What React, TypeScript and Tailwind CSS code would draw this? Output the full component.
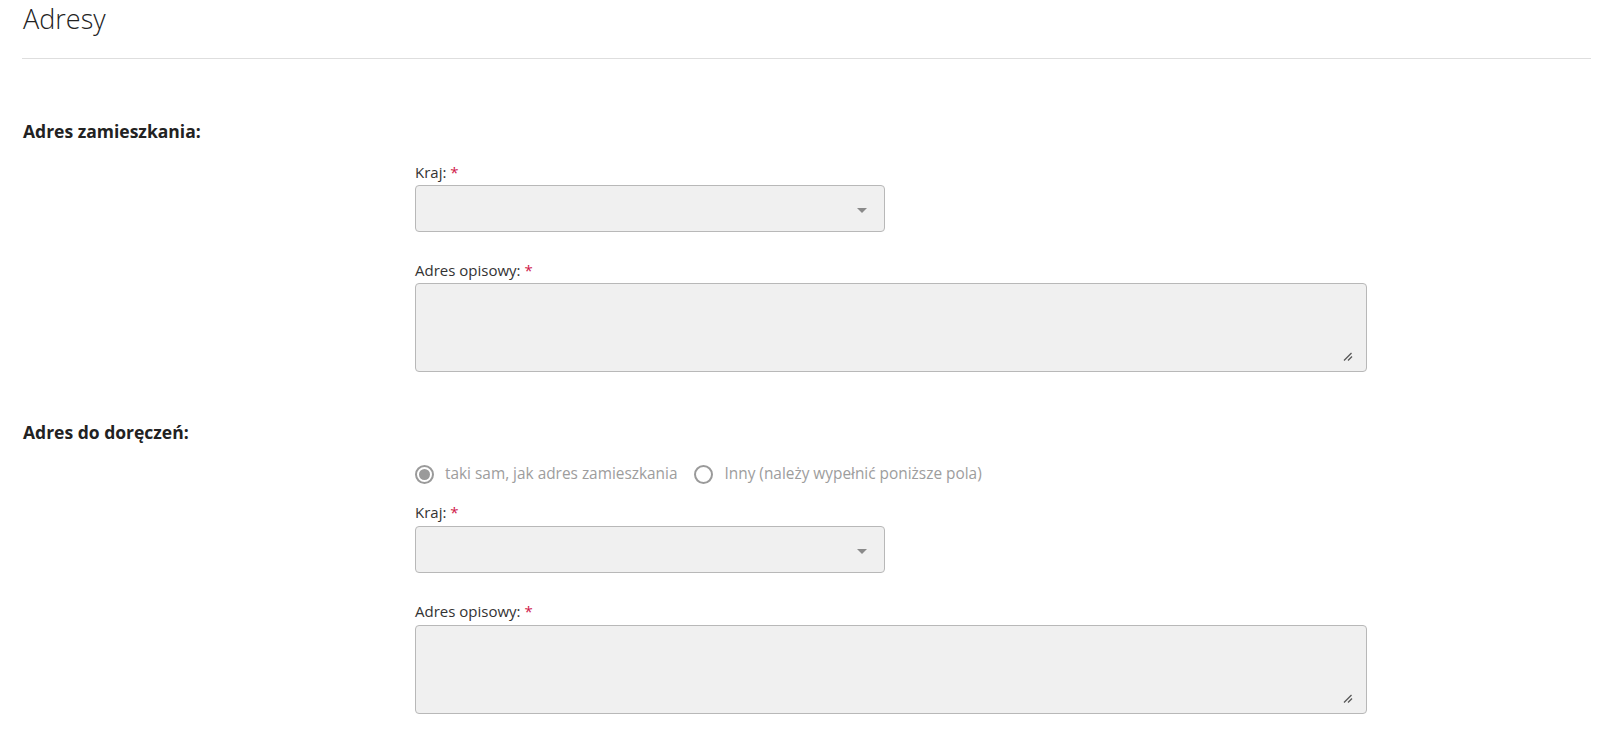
import React from "react";

const Star = () => <span className="text-[#d0184a]"> *</span>;

function Label({ text, className = "" }: { text: string; className?: string }) {
  return (
    <div className={"h-[20px] text-[15px] leading-[20px] text-[#333333] " + className}>
      {text}:<Star />
    </div>
  );
}

function SelectBox({ className = "" }: { className?: string }) {
  return (
    <div
      className={
        "relative w-[470px] h-[47px] rounded-[4px] border border-[#b8b8b8] bg-[#f0f0f0] " + className
      }
    >
      <svg
        className="absolute right-[17px] top-[22px]"
        width="10"
        height="5"
        viewBox="0 0 10 5"
      >
        <polygon points="0,0 10,0 5,5" fill="#8a8a8a" />
      </svg>
    </div>
  );
}

function TextArea({ className = "" }: { className?: string }) {
  return (
    <div
      className={
        "relative w-[952px] h-[89px] rounded-[4px] border border-[#b8b8b8] bg-[#f0f0f0] " + className
      }
    >
      <svg
        className="absolute right-[13px] bottom-[10px]"
        width="10"
        height="9"
        viewBox="0 0 10 9"
      >
        <line x1="1" y1="8.5" x2="8.5" y2="1" stroke="#555" strokeWidth="1.3" />
        <line x1="5" y1="8.5" x2="9" y2="4.5" stroke="#555" strokeWidth="1.3" />
      </svg>
    </div>
  );
}

function Radio({ checked, label }: { checked: boolean; label: string }) {
  return (
    <div className="flex items-center h-[20px]">
      <div className="w-[19px] h-[19px] rounded-full border-2 border-[#9a9a9a] flex items-center justify-center bg-white">
        {checked && <div className="w-[11px] h-[11px] rounded-full bg-[#9a9a9a]" />}
      </div>
      <span className="ml-[11px] text-[15.4px] leading-[20px] text-[#9d9d9d]">{label}</span>
    </div>
  );
}

export default function App() {
  return (
    <div
      className="bg-white min-h-[747px] pl-[22px] pr-[28px] text-[#222222]"
      style={{ fontFamily: '"Open Sans", "Noto Sans", sans-serif' }}
    >
      <h1 className="pt-[1px] h-[37px] text-[27px] leading-[36px] font-light text-[#222222] pl-[1px]">
        Adresy
      </h1>
      <div className="mt-[21px] border-t border-[#dedede]" />

      <h2 className="mt-[60px] h-[24px] text-[17.5px] leading-[24px] font-bold text-[#222222] pl-[1px]">
        Adres zamieszkania:
      </h2>
      <div className="pl-[393px]">
        <Label text="Kraj" className="mt-[19px]" />
        <SelectBox className="mt-[3px]" />
        <Label text="Adres opisowy" className="mt-[28px]" />
        <TextArea className="mt-[3px]" />
      </div>

      <h2 className="mt-[48px] h-[24px] text-[17.5px] leading-[24px] font-bold text-[#222222] pl-[1px]">
        Adres do doręczeń:
      </h2>
      <div className="pl-[393px]">
        <div className="mt-[20px] flex items-center gap-[17px]">
          <Radio checked label="taki sam, jak adres zamieszkania" />
          <Radio checked={false} label="Inny (należy wypełnić poniższe pola)" />
        </div>
        <Label text="Kraj" className="mt-[18px]" />
        <SelectBox className="mt-[4px]" />
        <Label text="Adres opisowy" className="mt-[28px]" />
        <TextArea className="mt-[4px]" />
      </div>
    </div>
  );
}
